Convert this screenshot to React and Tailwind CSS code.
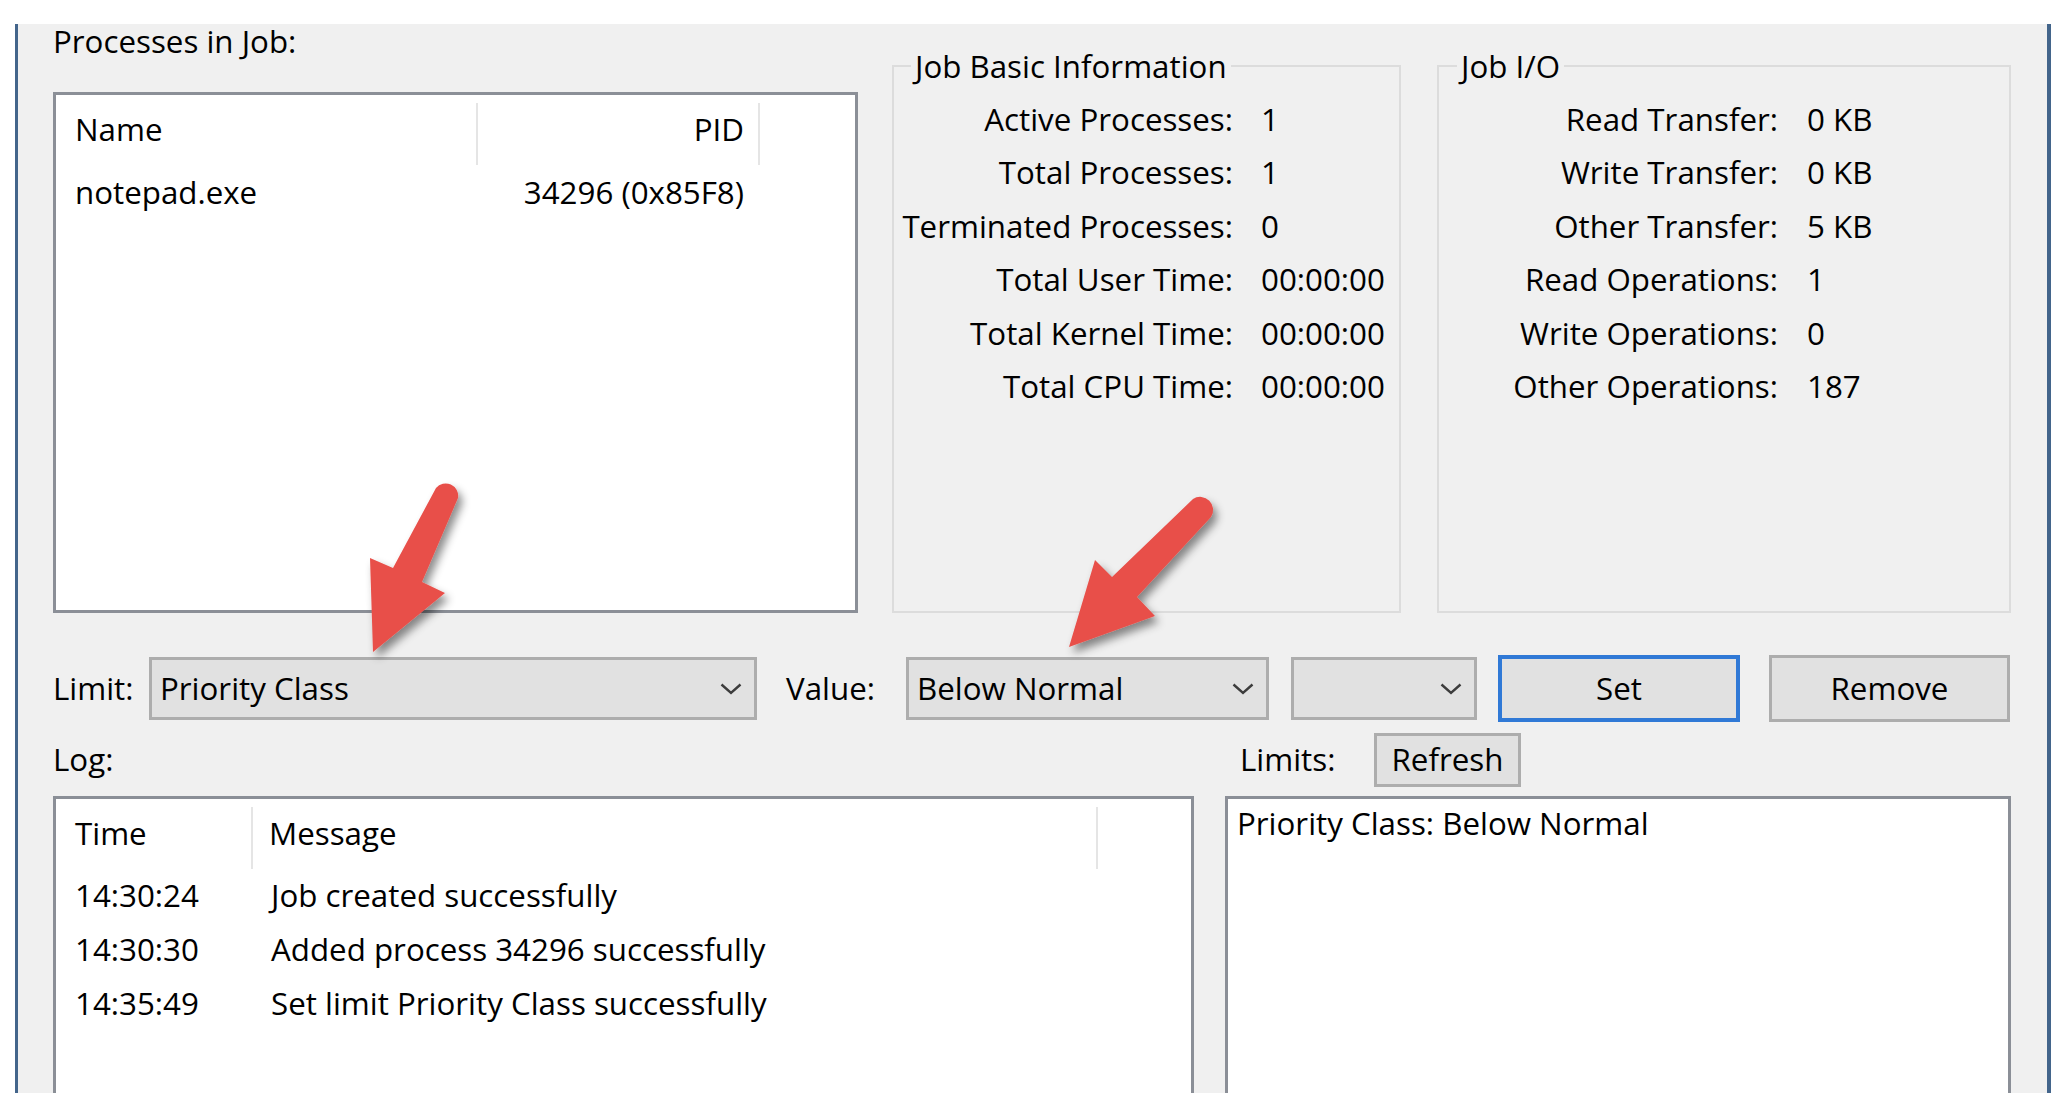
import React from "react";

function Chevron() {
  return (
    <svg width="22" height="12" viewBox="0 0 22 12" className="shrink-0">
      <polyline points="1.5,1.5 11,10 20.5,1.5" fill="none" stroke="#3c3c3c" strokeWidth="2.4" />
    </svg>
  );
}

function Combo({ className, text }) {
  return (
    <div className={className}>
      <span>{text}</span>
      <Chevron />
    </div>
  );
}

function InfoRow({ label, value }) {
  return (
    <>
      <div className="h-[53.4px] flex items-center justify-end whitespace-nowrap">{label}</div>
      <div className="h-[53.4px] flex items-center whitespace-nowrap">{value}</div>
    </>
  );
}

export default function App() {
  const combo =
    "h-[63px] bg-[#e1e1e1] border-[3px] border-[#adadad] flex items-center justify-between pl-[8px] pr-[12px]";
  return (
    <div className="relative w-[2064px] h-[1108px] bg-white overflow-hidden font-['Open_Sans',sans-serif] text-[31.3px] leading-none text-black">
      <div className="ml-[15px] mt-[24px] w-[2036px] h-[1069px] bg-[#f0f0f0] border-l-[3px] border-r-[4px] border-[#43658b] pl-[35px]">
        {/* Top section */}
        <div className="flex items-start h-[589px]">
          <div className="w-[805px] flex flex-col">
            <div className="h-[68px] pt-[4px]">
              <span className="block leading-[26px]">Processes in Job:</span>
            </div>
            <div className="h-[521px] bg-white border-[3px] border-[#8b8f97]">
              <div className="flex h-[70px] pt-[8px]">
                <div className="w-[422px] border-r-2 border-[#e5e5e5] flex items-center pb-[8px] pl-[19px]">Name</div>
                <div className="w-[282px] border-r-2 border-[#e5e5e5] flex items-center justify-end pb-[8px] pr-[14px]">PID</div>
              </div>
              <div className="flex h-[56px] items-center">
                <div className="w-[422px] pl-[19px]">notepad.exe</div>
                <div className="w-[282px] text-right pr-[16px]">34296 (0x85F8)</div>
              </div>
            </div>
          </div>

          <fieldset className="ml-[34px] mt-[25px] w-[509px] h-[564px] border-2 border-[#dcdcdc] p-0 m-0 min-w-0">
            <legend className="ml-[17px] px-[4px] leading-[34px]">Job Basic Information</legend>
            <div className="pt-[10px] grid grid-cols-[339px_1fr] gap-x-[28px]">
              <InfoRow label="Active Processes:" value="1" />
              <InfoRow label="Total Processes:" value="1" />
              <InfoRow label="Terminated Processes:" value="0" />
              <InfoRow label="Total User Time:" value="00:00:00" />
              <InfoRow label="Total Kernel Time:" value="00:00:00" />
              <InfoRow label="Total CPU Time:" value="00:00:00" />
            </div>
          </fieldset>

          <fieldset className="ml-[36px] mt-[25px] w-[574px] h-[564px] border-2 border-[#dcdcdc] p-0 m-0 min-w-0">
            <legend className="ml-[18px] px-[4px] leading-[34px]">Job I/O</legend>
            <div className="pt-[10px] grid grid-cols-[339px_1fr] gap-x-[29px]">
              <InfoRow label="Read Transfer:" value="0 KB" />
              <InfoRow label="Write Transfer:" value="0 KB" />
              <InfoRow label="Other Transfer:" value="5 KB" />
              <InfoRow label="Read Operations:" value="1" />
              <InfoRow label="Write Operations:" value="0" />
              <InfoRow label="Other Operations:" value="187" />
            </div>
          </fieldset>
        </div>

        {/* Controls row */}
        <div className="mt-[42px] h-[67px] flex items-center">
          <div className="w-[96px]">Limit:</div>
          <Combo className={"w-[608px] " + combo} text="Priority Class" />
          <div className="ml-[29px] w-[120px]">Value:</div>
          <Combo className={"w-[363px] " + combo} text="Below Normal" />
          <Combo className={"ml-[22px] w-[186px] " + combo} text="" />
          <button className="ml-[21px] w-[242px] h-[67px] border-[4px] border-[#3079d6] bg-[#e1e1e1] flex items-center justify-center">Set</button>
          <button className="ml-[29px] w-[241px] h-[67px] border-[3px] border-[#adadad] bg-[#e1e1e1] flex items-center justify-center">Remove</button>
        </div>

        {/* Labels row */}
        <div className="mt-[11px] h-[54px] flex items-center">
          <div className="w-[1172px]">Log:</div>
          <div className="w-[149px] pl-[15px]">Limits:</div>
          <button className="w-[147px] h-[54px] border-[3px] border-[#adadad] bg-[#e1e1e1] flex items-center justify-center">Refresh</button>
        </div>

        {/* Lists row */}
        <div className="mt-[9px] flex items-start">
          <div className="w-[1141px] h-[297px] bg-white border-[3px] border-b-0 border-[#8b8f97]">
            <div className="flex h-[70px] pt-[8px]">
              <div className="w-[197px] border-r-2 border-[#e5e5e5] flex items-center pb-[8px] pl-[19px]">Time</div>
              <div className="w-[845px] border-r-2 border-[#e5e5e5] flex items-center pb-[8px] pl-[16px]">Message</div>
            </div>
            {[
              ["14:30:24", "Job created successfully"],
              ["14:30:30", "Added process 34296 successfully"],
              ["14:35:49", "Set limit Priority Class successfully"],
            ].map(([t, m]) => (
              <div key={t} className="flex h-[54px] items-center">
                <div className="w-[197px] pl-[19px]">{t}</div>
                <div className="pl-[18px]">{m}</div>
              </div>
            ))}
          </div>
          <div className="ml-[31px] w-[786px] h-[297px] bg-white border-[3px] border-b-0 border-[#8b8f97]">
            <div className="h-[50px] flex items-center pl-[9px]">Priority Class: Below Normal</div>
          </div>
        </div>
      </div>

      {/* Annotation arrows */}
      <svg className="absolute left-0 top-0 pointer-events-none" width="2064" height="1108" viewBox="0 0 2064 1108">
        <defs>
          <filter id="sh" x="-30%" y="-30%" width="160%" height="160%">
            <feDropShadow dx="4" dy="6" stdDeviation="4" floodColor="#000" floodOpacity="0.45" />
          </filter>
        </defs>
        <path
          d="M393 568 L370 558 L373 652 L445 593 L422 582 L458 498 A12.5 12.5 0 0 0 436 488 Z"
          fill="#e8504a"
          filter="url(#sh)"
        />
        <path
          d="M1112 577 L1095 560 L1069 647 L1155 616 L1137 597 L1211 517 A13 13 0 0 0 1193 499 Z"
          fill="#e8504a"
          filter="url(#sh)"
        />
      </svg>
    </div>
  );
}
